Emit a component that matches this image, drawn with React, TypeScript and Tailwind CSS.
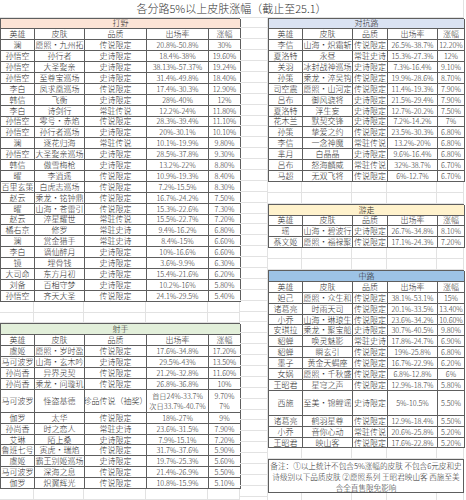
import React from "react";

type R = { c: string[]; d?: boolean };

const jungle: R[] = [
  { c: ["澜", "愿照·九州拓", "传说限定", "20.8%-50.8%", "30%"] },
  { c: ["孙悟空", "孙行者", "史诗限定", "18.4%-38%", "19.60%"] },
  { c: ["孙悟空", "大圣娶亲", "史诗限定", "38.13%-57.37%", "19.24%"] },
  { c: ["孙悟空", "至尊宝巡场", "史诗限定", "31.4%-49.8%", "18.40%"] },
  { c: ["李白", "凤求凰巡场", "传说限定", "17.4%-30.3%", "12.90%"] },
  { c: ["韩信", "飞衡", "史诗限定", "28%-40%", "12%"] },
  { c: ["李白", "诗剑行", "常驻传说", "12.2%-24%", "11.80%"] },
  { c: ["孙悟空", "零号·赤焰", "传说限定", "28.3%-39.4%", "11.10%"] },
  { c: ["孙悟空", "孙行者巡场", "史诗限定", "20%-30.1%", "10.10%"] },
  { c: ["澜", "逐花归海", "常驻传说", "10.1%-19.9%", "9.80%"] },
  { c: ["孙悟空", "大圣娶亲巡场", "史诗限定", "28.5%-37.8%", "9.30%"] },
  { c: ["韩信", "傲雪梅枪", "史诗限定", "13.2%-22%", "8.80%"] },
  { c: ["曜", "李逍遥", "传说限定", "10.9%-19.3%", "8.40%"] },
  { c: ["百里玄策", "白虎志巡场", "传说限定", "7.2%-15.5%", "8.30%"] },
  { c: ["赵云", "乘龙·铭钟鼎", "传说限定", "16.7%-24.2%", "7.50%"] },
  { c: ["曜", "山海·苍雷引", "传说限定", "15.3%-22.6%", "7.30%"] },
  { c: ["赵云", "淬星耀世", "常驻传说", "15.5%-22.7%", "7.20%"] },
  { c: ["橘右京", "修罗", "常驻史诗", "9.4%-16.2%", "6.80%"] },
  { c: ["澜", "赏金猎手", "常驻史诗", "8.4%-15%", "6.60%"] },
  { c: ["李白", "谪仙醉月", "史诗限定", "10%-16.6%", "6.60%"] },
  { c: ["镜", "埋骨钱", "史诗限定", "3.6%-9.9%", "6.30%"] },
  { c: ["大司命", "东方月初", "史诗限定", "15.4%-21.6%", "6.20%"] },
  { c: ["刘备", "百相守梦", "史诗限定", "10.2%-16%", "5.80%"] },
  { c: ["孙悟空", "齐天大圣", "传说限定", "24.1%-29.5%", "5.40%"] },
];

const adc: R[] = [
  { c: ["虞姬", "愿照·岁时盈", "传说限定", "17.6%-34.8%", "17.20%"] },
  { c: ["马可波罗", "山海·玄木吟", "史诗限定", "29.5%-43%", "13.50%"] },
  { c: ["孙尚香", "异界灵契", "传说限定", "21.2%-32.8%", "11.60%"] },
  { c: ["孙尚香", "乘龙·问璇玑", "传说限定", "26.8%-36.8%", "10%"] },
  { c: ["马可波罗", "怪盗基德", "珍品传说（抽奖）", "首日24%-33.7%\n次日33.7%-40.7%", "9.70%\n7%"], d: true },
  { c: ["伽罗", "太华", "传说限定", "18%-27%", "9%"] },
  { c: ["孙尚香", "时之恋人", "常驻史诗", "23.6%-31.5%", "7.90%"] },
  { c: ["艾琳", "陌上桑", "史诗限定", "7.9%-15.1%", "7.20%"] },
  { c: ["鲁班七号", "寅虎·瑞焰", "传说限定", "31.7%-37.6%", "5.90%"] },
  { c: ["虞姬", "霸王别姬巡场", "史诗限定", "19.7%-25.3%", "5.60%"] },
  { c: ["马可波罗", "深海之息", "传说限定", "21.4%-26.9%", "5.50%"] },
  { c: ["伽罗", "炽翼辉光", "传说限定", "10.8%-15.9%", "5.10%"] },
];

const top: R[] = [
  { c: ["李信", "山海·炽霜斩", "传说限定", "26.5%-38.7%", "12.20%"] },
  { c: ["夏洛特", "永昼", "常驻史诗", "15.3%-27.3%", "12%"] },
  { c: ["关羽", "冰封战神巡场", "史诗限定", "7.3%-16.4%", "9.10%"] },
  { c: ["孙策", "乘龙·淬吴钩", "传说限定", "19.9%-28.6%", "8.70%"] },
  { c: ["司空震", "愿照·山河定", "传说限定", "11.4%-19.3%", "7.90%"] },
  { c: ["吕布", "御风骁将", "史诗限定", "21.5%-29.4%", "7.90%"] },
  { c: ["夏洛特", "浮生妄", "史诗限定", "12.7%-20.2%", "7.50%"] },
  { c: ["花木兰", "默契交锋", "史诗限定", "7.2%-14.2%", "7%"] },
  { c: ["孙策", "挚爱之约", "传说限定", "23.5%-30.3%", "6.80%"] },
  { c: ["李信", "一念神魔", "常驻传说", "13.2%-20%", "6.80%"] },
  { c: ["芈月", "白晶晶", "史诗限定", "9.6%-16.4%", "6.80%"] },
  { c: ["吕布", "怒海麟威", "常驻传说", "32%-38.7%", "6.70%"] },
  { c: ["马超", "无双飞将", "传说限定", "6%-12.7%", "6.70%"] },
];

const roam: R[] = [
  { c: ["瑶", "山海·碧波行", "史诗限定", "26.7%-34.8%", "8.10%"] },
  { c: ["蔡文姬", "愿照·福禄聚", "传说限定", "17.1%-24.3%", "7.20%"] },
];

const mid: R[] = [
  { c: ["妲己", "愿照·众生和", "传说限定", "38.1%-53.1%", "15%"] },
  { c: ["诸葛亮", "时雨天司", "传说限定", "20.1%-33.5%", "13.40%"] },
  { c: ["小乔", "山海·琳琅生", "传说限定", "23.6%-34.2%", "10.60%"] },
  { c: ["安琪拉", "乘龙·聚宝船", "史诗限定", "30.7%-40.5%", "9.80%"] },
  { c: ["貂蝉", "唤灵魅影", "常驻史诗", "17.8%-24.7%", "6.90%"] },
  { c: ["貂蝉", "瞬玄引", "传说限定", "19%-25.8%", "6.80%"] },
  { c: ["墨子", "黄金天蝎座", "传说限定", "16.7%-22.9%", "6.20%"] },
  { c: ["女娲", "愿照·千秋盛", "传说限定", "6.8%-12.8%", "6%"] },
  { c: ["王昭君", "星穹之声", "传说限定", "12.9%-18.7%", "5.80%"] },
  { c: ["西施", "至美·锦鲤谣", "史诗限定", "5%-10.5%", "5.50%"], d: true },
  { c: ["诸葛亮", "鹤羽星尊", "传说限定", "12.9%-18.4%", "5.50%"] },
  { c: ["小乔", "音你心动", "常驻传说", "20.6%-25.8%", "5.20%"] },
  { c: ["王昭君", "映山客", "传说限定", "17.6%-22.8%", "5.20%"] },
];

const HEAD = ["英雄", "皮肤", "品质", "出场率", "涨幅"];

function Table({
  title,
  head,
  rows,
  side,
  dh,
}: {
  title: string;
  head: string;
  rows: R[];
  side: "l" | "r";
  dh: string;
}) {
  const grid =
    side === "l"
      ? "grid grid-cols-[34px_50px_62px_62px_32px]"
      : "grid grid-cols-[34px_50px_35px_50px_27px]";
  const cell =
    "border-r border-b border-[#5e5e5e] flex items-center justify-center whitespace-nowrap overflow-hidden text-center";
  return (
    <div className={`${grid} border-l border-t border-[#5e5e5e]`}>
      <div className={`col-span-5 h-[10.9px] ${head} ${cell} text-[8px]`}>{title}</div>
      {HEAD.map((h, i) => (
        <div key={i} className={`h-[10.9px] ${cell} text-[8px]`}>
          {h}
        </div>
      ))}
      {rows.map((r, ri) =>
        r.c.map((t, ci) => (
          <div
            key={ri + "-" + ci}
            className={`${r.d ? dh : "h-[10.9px]"} ${cell} ${
              ci >= 3 ? "text-[7.2px] whitespace-pre-line leading-[10px]" : "text-[8px]"
            } ${r.d && ci === 2 ? "text-[7.2px]" : ""}`}
          >
            {t}
          </div>
        ))
      )}
    </div>
  );
}

function Empty({ side, n }: { side: "l" | "r"; n: number }) {
  const grid =
    side === "l"
      ? "grid grid-cols-[34px_50px_62px_62px_32px]"
      : "grid grid-cols-[34px_50px_35px_50px_27px]";
  return (
    <div className={grid}>
      {Array.from({ length: n * 5 }).map((_, i) => (
        <div key={i} className="h-[10.9px] border-r border-b border-[#e2e2e2]" />
      ))}
    </div>
  );
}

export default function App() {
  return (
    <div className="w-[466px] h-[500px] overflow-hidden bg-white text-[#2a2a2a] font-light font-['Noto_Sans_CJK_SC',sans-serif]">
      <div className="w-[464px] h-[17.5px] flex items-center justify-center text-[11px] border-b border-r border-[#e2e2e2] text-[#333]">
        各分路5%以上皮肤涨幅（截止至25.1）
      </div>
      <div className="flex">
        <div className="w-[240px] flex flex-col shrink-0">
          <Table title="打野" head="bg-[#fce4d6]" rows={jungle} side="l" dh="h-[23px]" />
          <Empty side="l" n={2} />
          <Table title="射手" head="bg-[#e2efda]" rows={adc} side="l" dh="h-[23px]" />
          <Empty side="l" n={3} />
        </div>
        <div className="w-[28px] flex flex-col shrink-0">
          {Array.from({ length: 46 }).map((_, i) => (
            <div key={i} className="h-[10.9px] border-r border-b border-[#e2e2e2]" />
          ))}
        </div>
        <div className="w-[196px] flex flex-col shrink-0">
          <Table title="对抗路" head="bg-[#dae3f3]" rows={top} side="r" dh="h-[25px]" />
          <Empty side="r" n={2} />
          <Table title="游走" head="bg-[#fff2cc]" rows={roam} side="r" dh="h-[25px]" />
          <Empty side="r" n={2} />
          <Table title="中路" head="bg-[#9dc3e6]" rows={mid} side="r" dh="h-[25px]" />
          <Empty side="r" n={1} />
          <div className="h-[34px] border border-[#5e5e5e] flex flex-col items-center justify-center text-[7.6px] leading-[11px] text-[#2a2a2a]">
            <div className="whitespace-nowrap">备注：①以上统计不包含5%涨幅的皮肤 不包含6元皮和史</div>
            <div className="whitespace-nowrap">诗级别以下品质皮肤 ②愿照系列 王昭君映山客 西施至美</div>
            <div className="whitespace-nowrap">含全直售限免影响</div>
          </div>
          <Empty side="r" n={2} />
        </div>
      </div>
    </div>
  );
}
